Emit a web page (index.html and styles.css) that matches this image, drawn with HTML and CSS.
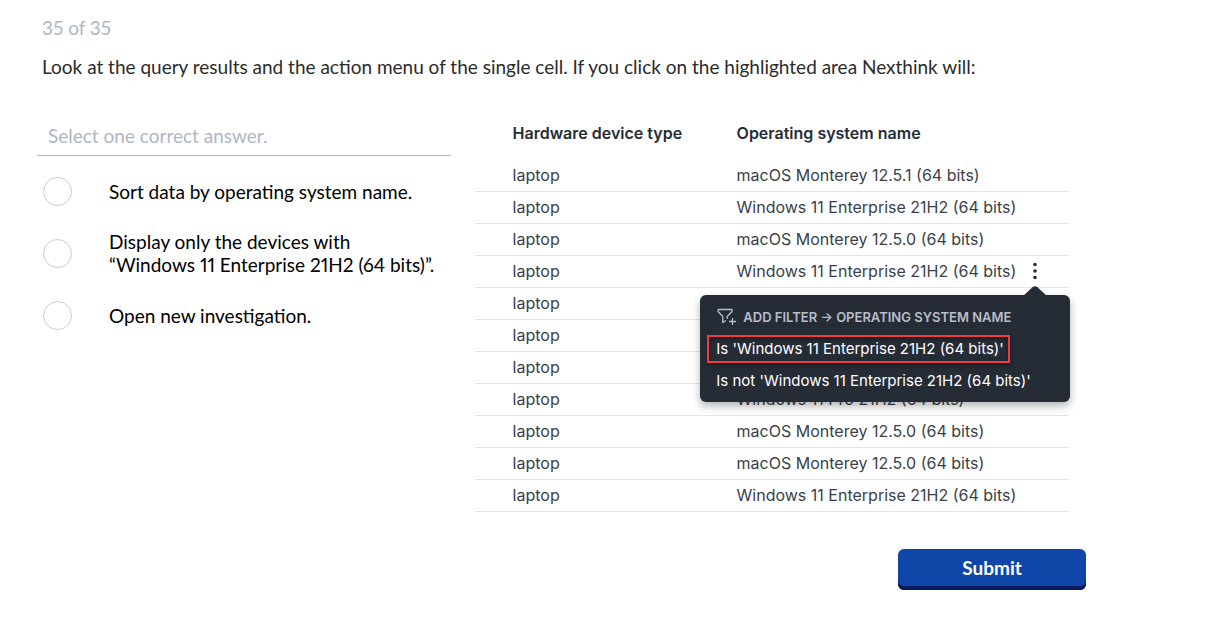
FILE: index.html
```html
<!DOCTYPE html>
<html lang="en">
<head>
<meta charset="utf-8">
<meta name="viewport" content="width=device-width, initial-scale=1">
<title>Question 35 of 35</title>
<link rel="stylesheet" href="styles.css">
</head>
<body>
<form class="quiz">
  <header class="question">
    <p class="progress">35 of 35</p>
    <h1 class="prompt">Look at the query results and the action menu of the single cell. If you click on the highlighted area Nexthink will:</h1>
  </header>
  <div class="content">
    <fieldset class="answers">
      <legend class="hint">Select one correct answer.</legend>
      <label class="answer"><input class="radio" type="radio" name="answer"><span>Sort data by operating system name.</span></label>
      <label class="answer"><input class="radio" type="radio" name="answer"><span>Display only the devices with<br>“Windows 11 Enterprise 21H2 (64 bits)”.</span></label>
      <label class="answer"><input class="radio" type="radio" name="answer"><span>Open new investigation.</span></label>
    </fieldset>
    <table class="results">
      <thead>
        <tr><th class="type">Hardware device type</th><th>Operating system name</th></tr>
      </thead>
      <tbody>
        <tr><td>laptop</td><td>macOS Monterey 12.5.1 (64 bits)</td></tr>
        <tr><td>laptop</td><td>Windows 11 Enterprise 21H2 (64 bits)</td></tr>
        <tr><td>laptop</td><td>macOS Monterey 12.5.0 (64 bits)</td></tr>
        <tr><td>laptop</td><td>
          <div class="active-cell">
            <span>Windows 11 Enterprise 21H2 (64 bits)</span>
            <div class="actions">
              <button class="more" type="button" aria-label="Cell actions">
                <svg width="4" height="18" viewBox="0 0 4 18" fill="currentColor"><circle cx="2" cy="2.5" r="1.8"/><circle cx="2" cy="9" r="1.8"/><circle cx="2" cy="15.5" r="1.8"/></svg>
              </button>
              <div class="menu">
                <svg class="menu-arrow" width="24" height="10" viewBox="0 0 24 10"><path d="M0 10 L9.500 1.200 Q12 -.8 14.500 1.200 L24 10Z" fill="#262c36"/></svg>
                <p class="menu-title">
                  <svg width="20" height="18" viewBox="0 0 20 18" fill="none" stroke="currentColor" stroke-width="1.300" stroke-linejoin="round"><path d="M1 1.500H15V3.500L10.200 8.500V11M1 1.500V3.500L5.800 8.500V14.500L9 12.500M15.500 10V17M12 13.500H19"/></svg>
                  <span>ADD FILTER → OPERATING SYSTEM NAME</span>
                </p>
                <button class="menu-item highlighted" type="button">Is 'Windows 11 Enterprise 21H2 (64 bits)'</button>
                <button class="menu-item" type="button">Is not 'Windows 11 Enterprise 21H2 (64 bits)'</button>
              </div>
            </div>
          </div>
        </td></tr>
        <tr><td>laptop</td><td></td></tr>
        <tr><td>laptop</td><td></td></tr>
        <tr><td>laptop</td><td></td></tr>
        <tr><td>laptop</td><td>Windows 11 Pro 21H2 (64 bits)</td></tr>
        <tr><td>laptop</td><td>macOS Monterey 12.5.0 (64 bits)</td></tr>
        <tr><td>laptop</td><td>macOS Monterey 12.5.0 (64 bits)</td></tr>
        <tr><td>laptop</td><td>Windows 11 Enterprise 21H2 (64 bits)</td></tr>
      </tbody>
    </table>
  </div>
  <footer class="footer"><button class="submit" type="submit">Submit</button></footer>
</form>
</body>
</html>
```
FILE: styles.css
```css
* { box-sizing: border-box; }

body {
  margin: 0;
  background: #fff;
  color: #000;
  font: 19px/23px Lato, "Open Sans", sans-serif;
  font-variant-numeric: proportional-nums;
}

button { font: inherit; cursor: pointer; }

.quiz { padding: 16px 132px 34px 37px; }

.question { padding-left: 5px; }

.progress { margin: 0; color: #aeb6c4; }

.prompt {
  margin: 16px 0 0;
  color: #2b2b2b;
  font-size: 19px;
  font-weight: 400;
}

.content {
  display: grid;
  grid-template-columns: 69fr 99fr;
  gap: 24px;
  align-items: start;
  margin: 32px 18px 0 0;
}

.answers {
  display: flex;
  flex-direction: column;
  gap: 22px;
  min-width: 0;
  margin: 14px 0 0;
  padding: 0;
  border: 0;
}

.hint {
  width: 100%;
  margin-bottom: 18px;
  padding: 0 11px 8px;
  border-bottom: 1px solid #b1b6c6;
  color: #aeb6c4;
}

.answer {
  display: flex;
  align-items: center;
  gap: 37px;
  min-height: 34px;
  padding-left: 6px;
}

.radio {
  appearance: none;
  flex: none;
  width: 29px;
  height: 29px;
  margin: 0;
  border: 1px solid #ccc;
  border-radius: 50%;
  background: #fff;
}

.radio:checked { background: radial-gradient(#1046a8 45%, #fff 50%); }

.results {
  width: 100%;
  border-collapse: collapse;
  table-layout: fixed;
  color: #3a3f49;
  font: 16px/20px Inter, sans-serif;
}

.results th {
  height: 49px;
  padding: 0 0 3px;
  color: #262c36;
  font-weight: 600;
  text-align: left;
  vertical-align: middle;
}

.results td {
  height: 32px;
  padding: 0;
  border-bottom: 1px solid #e2e2f0;
  white-space: nowrap;
}

.results .type { width: 262px; }

.results th:first-child,
.results td:first-child { padding-left: 38px; }

.active-cell { display: flex; align-items: center; gap: 8px; }

.actions { position: relative; display: flex; }

.more {
  display: flex;
  justify-content: center;
  width: 22px;
  padding: 0;
  border: 0;
  background: none;
  color: #262c36;
}

.menu {
  position: absolute;
  z-index: 1;
  top: 33px;
  right: -24px;
  width: 370px;
  padding: 10px 7px 7px;
  border-radius: 6px;
  background: #262c36;
  box-shadow: 0 4px 8px rgb(0 0 0 / 30%);
  color: #fff;
  font-size: 15px;
}

.menu-arrow { position: absolute; top: -9px; right: 23px; }

.menu-title {
  display: flex;
  align-items: center;
  gap: 6px;
  margin: 0 0 8px;
  padding: 2px 10px 0;
  color: #b9bcca;
  font-size: 13px;
  font-weight: 600;
}

.menu-item {
  display: block;
  padding: 2px 4px 2px 7px;
  border: 2px solid transparent;
  background: none;
  color: inherit;
  line-height: 20px;
}

.menu-item + .menu-item { margin-top: 4px; }

.highlighted {
  border-color: #ef3e42;
  box-shadow: 0 2px 4px rgb(0 0 0 / 40%), inset 0 2px 4px rgb(0 0 0 / 40%);
}

.footer {
  display: flex;
  justify-content: flex-end;
  margin-top: 37px;
}

.submit {
  width: 188px;
  height: 41px;
  padding: 0 0 4px;
  border: 0;
  border-radius: 6px;
  background: #1046a8;
  box-shadow: inset 0 -4px #08195f;
  color: #fff;
  font-weight: 700;
}
```
